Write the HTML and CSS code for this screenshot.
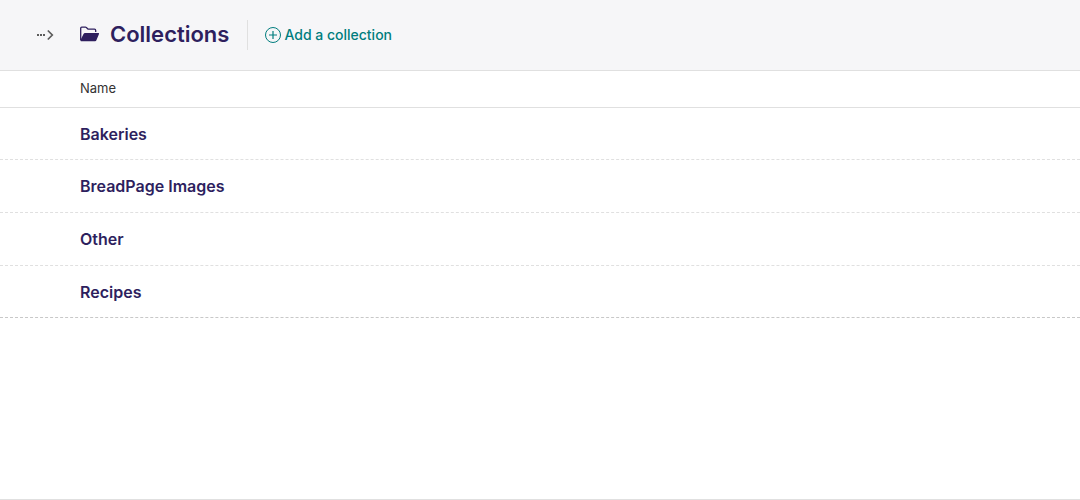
FILE: index.html
```html
<!DOCTYPE html>
<html lang="en">
<head>
<meta charset="utf-8">
<title>Collections</title>
<link rel="stylesheet" href="styles.css">
</head>
<body>
<main class="page">
  <header class="header">
    <button class="toggle" type="button" aria-label="Toggle breadcrumbs">
      <svg class="toggle-icon" viewBox="0 0 18 12" aria-hidden="true"><path d="M1 5h2v2H1zM4 5h2v2H4zM7 5h2v2H7z" fill="currentColor"/><path d="M11.800 1.500 16.300 6l-4.500 4.500" fill="none" stroke="currentColor" stroke-width="1.700"/></svg>
    </button>
    <h1 class="title">
      <svg class="folder" viewBox="0 0 20 16" aria-hidden="true"><path fill="none" stroke="currentColor" stroke-width="1.300" d="M.7 14V2.200Q.7 1.200 1.700 1.200H5.500Q6 1.200 6.400 1.600L7.600 2.700Q8.100 3.200 8.800 3.200H14.500Q15.700 3.200 15.700 4.400V6"/><path fill="currentColor" d="M5 7H18.400Q19.400 7 19 8L16.500 14Q16.100 15.200 15 15.200H1.200Q0 15.200 .5 14L3.500 8Q4 7 5 7z"/></svg>
      Collections
    </h1>
    <a class="add" href="#add">
      <svg class="plus" viewBox="0 0 16 16" fill="none" stroke="currentColor" aria-hidden="true"><circle cx="8" cy="8" r="7.500"/><path stroke-width="1.200" d="M8 4v8M4 8h8"/></svg>
      Add a collection
    </a>
  </header>
  <table class="listing">
    <thead><tr><th scope="col">Name</th></tr></thead>
    <tbody>
      <tr><td><a href="#bakeries">Bakeries</a></td></tr>
      <tr><td><a href="#breadpage">BreadPage Images</a></td></tr>
      <tr><td><a href="#other">Other</a></td></tr>
      <tr><td><a href="#recipes">Recipes</a></td></tr>
    </tbody>
  </table>
</main>
</body>
</html>
```
FILE: styles.css
```css
* { box-sizing: border-box; }
body { margin: 0; background: #fff; color: #333; font-family: Inter, sans-serif; }
.page { min-height: 100vh; border-bottom: 1px solid #e0e0e0; }
.header { display: flex; align-items: center; min-height: 71px; padding: 0 20px 0 36px; background: #f6f6f8; border-bottom: 1px solid #e0e0e0; }
.toggle { display: flex; width: 44px; padding: 0; border: 0; background: none; color: #5c5c5c; }
.toggle-icon { width: 18px; height: 12px; }
.title { display: flex; align-items: center; gap: 10px; margin: 0 18px 2px 0; color: #2e1f5e; font-size: 22px; line-height: 30px; font-weight: 600; }
.folder { width: 20px; height: 16px; }
.add { display: flex; align-items: center; gap: 3px; padding-left: 17px; border-left: 1px solid #e0e0e0; color: #007d7e; font-size: 14px; line-height: 30px; font-weight: 500; text-decoration: none; }
.plus { width: 16px; height: 16px; }
.listing { width: 100%; border-collapse: separate; border-spacing: 0; text-align: left; }
.listing th { padding: 7px 20px 9px 80px; border-bottom: 1px solid #e0e0e0; font-size: 13px; line-height: 20px; font-weight: 400; }
.listing td { padding: 16px 20px 16px 80px; border-bottom: 1px dashed #e0e0e0; font-size: 16px; line-height: 20px; }
.listing tbody tr:first-child td { padding-bottom: 15px; }
.listing tbody tr:last-child td { padding-bottom: 15px; border-bottom-color: #c8c8c8; }
.listing a { color: #2e1f5e; font-weight: 600; text-decoration: none; }
```
